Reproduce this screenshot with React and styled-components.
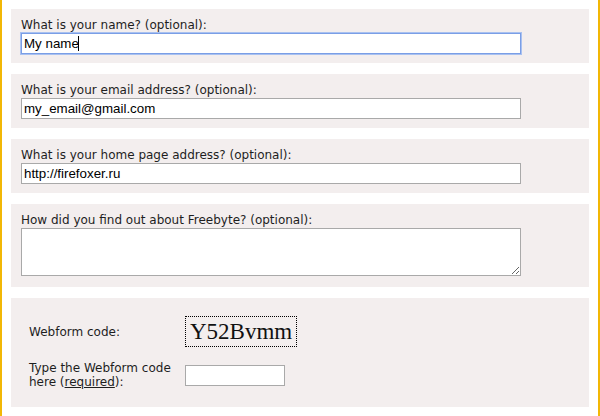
import React from 'react';
import styled, { createGlobalStyle } from 'styled-components';

const GlobalStyle = createGlobalStyle`
  html, body {
    margin: 0;
    padding: 0;
    background: #ffffff;
  }
`;

const Page = styled.div`
  box-sizing: border-box;
  width: 600px;
  min-height: 416px;
  border-left: 2px solid #f2b705;
  border-right: 2px solid #f2b705;
  padding: 9px 9px;
  display: flex;
  flex-direction: column;
  gap: 11px;
  font-family: 'DejaVu Sans', Verdana, sans-serif;
  font-size: 12px;
  color: #1e1e1e;
`;

const Panel = styled.div`
  background: #f3eeee;
  padding: 9px 10px 9px;
  display: flex;
  flex-direction: column;
`;

const Label = styled.label`
  display: block;
  line-height: 15px;
`;

const Field = styled.div`
  position: relative;
  width: ${props => props.width || 500}px;
`;

const Caret = styled.span`
  position: absolute;
  left: 57px;
  top: 3px;
  width: 1px;
  height: 15px;
  background: #000;
`;

const TextInput = styled.input`
  box-sizing: border-box;
  display: block;
  width: 100%;
  height: 21px;
  margin: 0;
  padding: 1px 2px;
  font-family: 'Liberation Sans', Arial, sans-serif;
  font-size: 13.33px;
  color: #000;
  background: #fff;
  border: 1px solid ${props => (props.active ? '#7a9ee6' : '#a9a9a9')};
  box-shadow: ${props => (props.active ? '0 0 0 1px #a9c1f0' : 'none')};
  outline: none;
`;

const TextArea = styled.textarea`
  box-sizing: border-box;
  display: block;
  width: 500px;
  height: 48px;
  margin: 0 0 2px;
  padding: 2px;
  font-family: 'Liberation Sans', Arial, sans-serif;
  font-size: 13px;
  background: #fff;
  border: 1px solid #a9a9a9;
  outline: none;
`;

const CodePanel = styled.div`
  background: #f3eeee;
  padding: 18px 18px 18px;
  display: grid;
  grid-template-columns: 148px auto;
  column-gap: 8px;
  row-gap: 14px;
  align-items: center;
  justify-items: start;
`;

const CodeLabel = styled.div`
  line-height: 14px;
`;

const Required = styled.span`
  text-decoration: underline;
`;

const Captcha = styled.div`
  box-sizing: border-box;
  width: 112px;
  height: 31px;
  padding: 1px 0 0 4px;
  border: 1px dotted #000;
  font-family: 'Liberation Serif', 'Times New Roman', serif;
  font-size: 23px;
  line-height: 27px;
  color: #111;
`;

const fields = [
  { label: 'What is your name? (optional):', value: 'My name', active: true },
  { label: 'What is your email address? (optional):', value: 'my_email@gmail.com' },
  { label: 'What is your home page address? (optional):', value: 'http://firefoxer.ru' },
];

export default function App() {
  return (
    <>
      <GlobalStyle />
      <Page>
        {fields.map(f => (
          <Panel key={f.label}>
            <Label>{f.label}</Label>
            <Field>
              <TextInput active={f.active} defaultValue={f.value} />
              {f.active && <Caret />}
            </Field>
          </Panel>
        ))}
        <Panel>
          <Label>How did you find out about Freebyte? (optional):</Label>
          <TextArea />
        </Panel>
        <CodePanel>
          <CodeLabel>Webform code:</CodeLabel>
          <Captcha>Y52Bvmm</Captcha>
          <CodeLabel>
            Type the Webform code here (<Required>required</Required>):
          </CodeLabel>
          <Field width={100}>
            <TextInput />
          </Field>
        </CodePanel>
      </Page>
    </>
  );
}
